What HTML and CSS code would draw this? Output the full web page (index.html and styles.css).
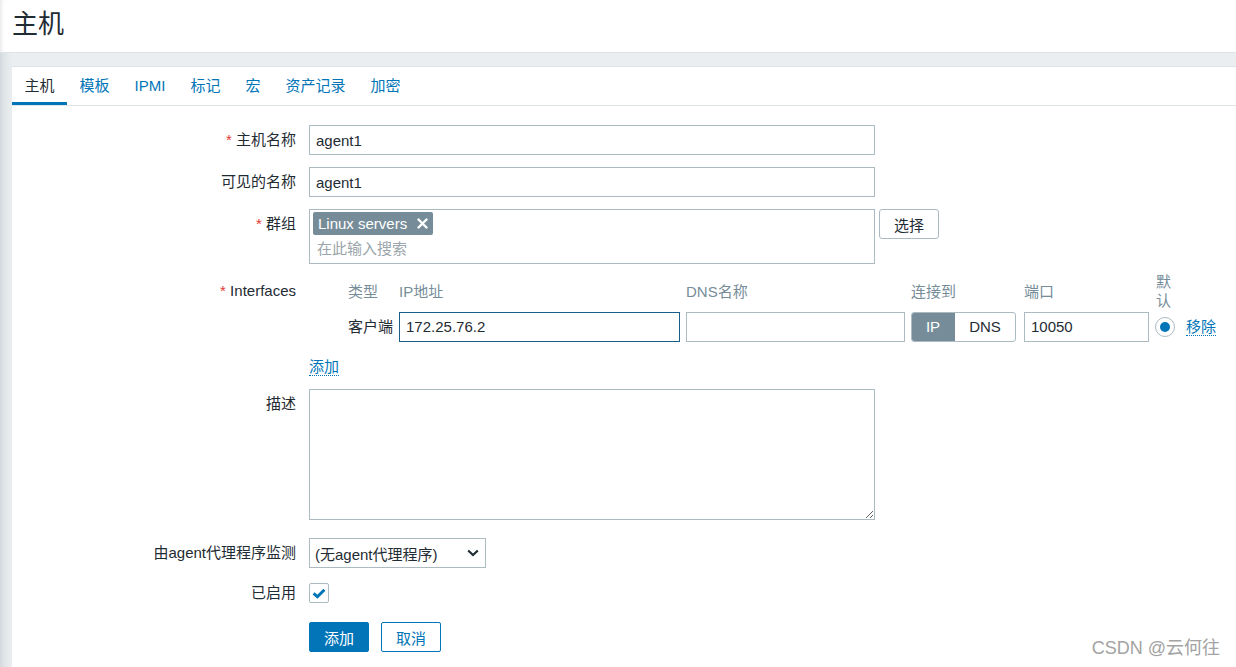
FILE: index.html
```html
<!DOCTYPE html>
<html lang="zh-CN">
<head>
<meta charset="utf-8">
<title>主机</title>
<link rel="stylesheet" href="styles.css">
</head>
<body>
<div class="page">
  <header class="top"><h1 class="title">主机</h1></header>
  <main class="panel">
    <nav class="tabs">
      <a class="tab active">主机</a>
      <a class="tab">模板</a>
      <a class="tab">IPMI</a>
      <a class="tab">标记</a>
      <a class="tab">宏</a>
      <a class="tab">资产记录</a>
      <a class="tab">加密</a>
    </nav>
    <form class="form">
      <div class="row">
        <div class="lbl"><span class="req">*</span> 主机名称</div>
        <input class="text" value="agent1">
      </div>
      <div class="row">
        <div class="lbl">可见的名称</div>
        <input class="text" value="agent1">
      </div>
      <div class="row">
        <div class="lbl"><span class="req">*</span> 群组</div>
        <div class="ms">
          <span class="tag">Linux servers
            <svg class="tag-x" width="11" height="11" viewBox="0 0 11 11"><path d="M1.5 1.5 L9.5 9.5 M9.5 1.5 L1.5 9.5" stroke="#fff" stroke-width="2.4" stroke-linecap="round"/></svg>
          </span>
          <div class="ms-ph">在此输入搜索</div>
        </div>
        <button type="button" class="btn-alt">选择</button>
      </div>
      <div class="row row-iface">
        <div class="lbl lbl-iface"><span class="req">*</span> Interfaces</div>
        <div class="iface">
          <div class="ih"></div>
          <div class="ih">类型</div>
          <div class="ih">IP地址</div>
          <div class="ih">DNS名称</div>
          <div class="ih">连接到</div>
          <div class="ih">端口</div>
          <div class="ih"><span class="narrow">默认</span></div>
          <div class="ih"></div>

          <div class="cell"></div>
          <div class="cell">客户端</div>
          <div class="cell"><input class="text ip" value="172.25.76.2"></div>
          <div class="cell"><input class="text dns" value=""></div>
          <div class="cell">
            <div class="seg"><span class="seg-on">IP</span><span class="seg-off">DNS</span></div>
          </div>
          <div class="cell"><input class="text port" value="10050"></div>
          <div class="cell"><span class="radio"><span class="radio-dot"></span></span></div>
          <div class="cell"><a class="link">移除</a></div>
        </div>
      </div>
      <div class="row row-add">
        <div class="lbl"></div>
        <a class="link">添加</a>
      </div>
      <div class="row row-desc">
        <div class="lbl">描述</div>
        <textarea class="area"></textarea>
      </div>
      <div class="row row-proxy">
        <div class="lbl">由agent代理程序监测</div>
        <div class="sel">
          <span>(无agent代理程序)</span>
          <svg width="12" height="8" viewBox="0 0 12 8"><path d="M1.2 1.5 L6 6 L10.8 1.5" fill="none" stroke="#1f2c33" stroke-width="2.2"/></svg>
        </div>
      </div>
      <div class="row row-check">
        <div class="lbl lbl-check">已启用</div>
        <span class="check">
          <svg width="18" height="18" viewBox="0 0 18 18"><path d="M3.6 9.4 L7.4 12.8 L14.4 5.8" fill="none" stroke="#0275b8" stroke-width="3"/></svg>
        </span>
      </div>
      <div class="row row-btns">
        <div class="lbl"></div>
        <div class="btns">
          <button type="button" class="btn-main">添加</button>
          <button type="button" class="btn-cancel">取消</button>
        </div>
      </div>
    </form>
  </main>
  <div class="watermark">CSDN @云何往</div>
</div>
</body>
</html>
```

FILE: styles.css
```css
* { box-sizing: border-box; }
html, body { margin: 0; padding: 0; }
body {
  font-family: "Liberation Sans", Arial, "Noto Sans CJK SC", sans-serif;
  font-size: 15px;
  color: #1f2c33;
  background: #ebeef0;
}
.page {
  position: relative;
  min-height: 100vh;
  display: flex;
  flex-direction: column;
  background: linear-gradient(to right, #d2d9dd 0, #e1e6e9 5px, #ebeef0 12px);
}
.top {
  height: 53px;
  background: #fff;
  border-bottom: 1px solid #dde3e6;
  display: flex;
  align-items: center;
  padding: 0 12px 4px;
  box-shadow: inset 4px 0 4px -3px rgba(0, 0, 0, 0.12);
}
.title {
  margin: 0;
  font-size: 26px;
  font-weight: normal;
  line-height: 30px;
  color: #1f2c33;
}
.panel {
  flex: 1;
  margin: 13px 0 0 12px;
  background: #fff;
  border-top: 1px solid #dde3e6;
}
.tabs {
  display: flex;
  height: 39px;
  border-bottom: 1px solid #dfe4e7;
}
.tab {
  padding: 0 12.5px;
  line-height: 38px;
  height: 38px;
  color: #0275b8;
  text-decoration: none;
}
.tab.active {
  color: #1f2c33;
  box-shadow: inset 0 -3px 0 #0275b8;
}
.form {
  display: flex;
  flex-direction: column;
  gap: 12px;
  padding-top: 19px;
}
.row {
  display: flex;
  align-items: flex-start;
}
.lbl {
  flex: none;
  width: 284px;
  margin-right: 13px;
  text-align: right;
  line-height: 30px;
}
.req { color: #e33734; }
.text {
  width: 566px;
  height: 30px;
  border: 1px solid #acbbc2;
  border-radius: 0;
  padding: 0 6px;
  font: inherit;
  color: #1f2c33;
  background: #fff;
  outline: none;
  margin: 0;
}
.ms {
  width: 566px;
  height: 55px;
  border: 1px solid #acbbc2;
  padding: 2px 3px;
}
.tag {
  display: inline-flex;
  align-items: center;
  gap: 10px;
  height: 23px;
  padding: 0 5px;
  background: #768d99;
  color: #fff;
  border-radius: 2px;
  line-height: 23px;
}
.ms-ph {
  margin-top: 3px;
  padding-left: 4px;
  line-height: 22px;
  color: #9ba5ab;
}
.btn-alt {
  margin-left: 4px;
  width: 60px;
  height: 30px;
  border: 1px solid #acbbc2;
  border-radius: 3px;
  background: #fff;
  color: #1f2c33;
  font: inherit;
  padding: 0;
}
.row-iface { margin-top: -4px; }
.lbl-iface { padding-top: 4px; }
.iface {
  display: grid;
  grid-template-columns: 39px 51px 287px 225px 113px 132px 30px auto;
  grid-template-rows: 38px 30px;
  row-gap: 2px;
}
.ih {
  display: flex;
  align-items: center;
  color: #768d99;
  line-height: 19px;
}
.narrow { width: 16px; }
.cell {
  display: flex;
  align-items: center;
  line-height: 30px;
}
.ip { width: 281px; border-color: #1a5e8c; }
.dns { width: 219px; }
.port { width: 125px; }
.seg {
  display: flex;
  width: 105px;
  height: 30px;
  border: 1px solid #acbbc2;
  border-radius: 3px;
  overflow: hidden;
}
.seg-on, .seg-off {
  display: flex;
  align-items: center;
  justify-content: center;
}
.seg-on {
  width: 44px;
  margin: -1px 0 -1px -1px;
  background: #768d99;
  color: #fff;
}
.seg-off { flex: 1; color: #1f2c33; }
.radio {
  display: flex;
  align-items: center;
  justify-content: center;
  width: 20px;
  height: 20px;
  margin-left: -1px;
  border: 1px solid #acbbc2;
  border-radius: 50%;
  background: #fff;
}
.radio-dot {
  width: 10px;
  height: 10px;
  border-radius: 50%;
  background: #0275b8;
}
.link {
  display: inline-block;
  color: #0275b8;
  line-height: 17px;
  border-bottom: 1px dotted #0275b8;
  text-decoration: none;
}
.row-add { margin-top: 4px; }
.row-desc { margin-top: 1px; }
.area {
  display: block;
  width: 566px;
  height: 131px;
  margin: 0;
  border: 1px solid #acbbc2;
  border-radius: 0;
  font: inherit;
  padding: 4px 6px;
  outline: none;
}
.row-proxy { margin-top: 6px; }
.sel {
  display: flex;
  align-items: center;
  justify-content: space-between;
  width: 177px;
  height: 30px;
  border: 1px solid #acbbc2;
  padding: 0 6px 0 5px;
  background: #fff;
}
.row-check { margin-top: 3px; }
.lbl-check { line-height: 20px; }
.check {
  display: flex;
  align-items: center;
  justify-content: center;
  width: 20px;
  height: 20px;
  border: 1px solid #acbbc2;
  border-radius: 2px;
  background: #fff;
}
.row-btns { margin-top: 7px; }
.btns { display: flex; gap: 12px; }
.btn-main, .btn-cancel {
  width: 60px;
  height: 30px;
  border-radius: 2px;
  font: inherit;
  padding: 0;
}
.btn-main {
  background: #0275b8;
  border: 1px solid #0275b8;
  color: #fff;
}
.btn-cancel {
  background: #fff;
  border: 1px solid #0275b8;
  color: #0275b8;
}
.watermark {
  position: absolute;
  right: 16px;
  bottom: 8px;
  font-size: 18px;
  line-height: 22px;
  color: #a3a3a3;
}
```
